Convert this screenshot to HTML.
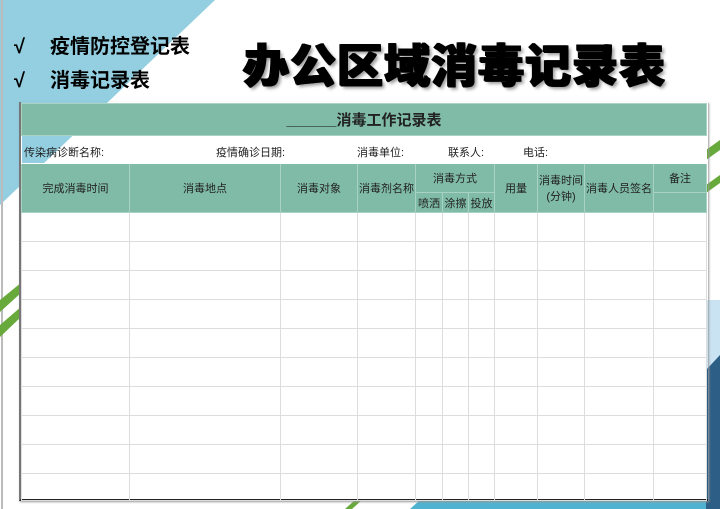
<!DOCTYPE html>
<html><head><meta charset="utf-8"><style>
body{margin:0;width:720px;height:509px;overflow:hidden;background:#fff;position:relative;font-family:"Liberation Sans","Noto Sans CJK SC",sans-serif}
.abs{position:absolute}
table{border-collapse:collapse;table-layout:fixed}
td{border:1px solid #ddd;padding:0;text-align:center;font-size:11px;color:#222}
.g td{background:#7fbba6;border-color:#a8d2c2}
</style></head><body>
<svg class="abs" style="left:0;top:0" width="720" height="509">
<polygon points="0,0 215,0 0,205" fill="#93cfe1"/>
<line x1="2" y1="0" x2="2" y2="509" stroke="#bbb" stroke-width="2"/>
<polygon points="0,300 22,282 22,292 0,312" fill="#67a93a"/>
<polygon points="0,325 22,306 22,316 0,337" fill="#67a93a"/>
<polygon points="706,150 720,140 720,150 706,160" fill="#67a93a"/>
<polygon points="706,185 720,175 720,183 706,193" fill="#67a93a"/>
<rect x="706" y="300" width="14" height="209" fill="#c9e3f3"/>
<polygon points="706,370 720,355 720,509 706,509" fill="#2d5f86"/>
<polygon points="410,509 420,500 706,500 706,509" fill="#4fb3d0"/>
<polygon points="345,509 355,500 362,500 352,509" fill="#67a93a"/>
</svg>
<div class="abs" style="left:14px;top:30px;font-size:20px;font-weight:bold;line-height:34px"><span style="display:inline-block;width:36px">√</span>疫情防控登记表<br><span style="display:inline-block;width:36px">√</span>消毒记录表</div>
<div class="abs" style="left:243px;top:30px;font-size:46px;font-weight:900;letter-spacing:1px;white-space:nowrap;text-shadow:1px 1px 0 #000,-1px 0 0 #000,1px 0 0 #000,0 1px 0 #000,3px 3px 3px #999">办公区域消毒记录表</div>
<div class="abs" style="left:19px;top:102px;width:687px;height:397px;border-left:2px solid #777;border-bottom:2px solid #222;box-shadow:1px 1px 2px #999"></div>
<table class="abs" style="left:21px;top:103px;width:685px">
<colgroup><col style="width:108px"><col style="width:151px"><col style="width:77px"><col style="width:58px"><col style="width:27px"><col style="width:26px"><col style="width:26px"><col style="width:43px"><col style="width:47px"><col style="width:69px"><col style="width:53px"></colgroup>
<tr class="g" style="height:32px"><td colspan="11" style="font-size:15px;font-weight:bold">______消毒工作记录表</td></tr>
<tr style="height:28px"><td colspan="11" style="border-color:#fff;text-align:left;position:relative"><span style="position:absolute;left:2px;top:8px">传染病诊断名称:</span><span style="position:absolute;left:194px;top:8px">疫情确诊日期:</span><span style="position:absolute;left:335px;top:8px">消毒单位:</span><span style="position:absolute;left:426px;top:8px">联系人:</span><span style="position:absolute;left:501px;top:8px">电话:</span></td></tr>
<tr class="g" style="height:29px"><td rowspan="2">完成消毒时间</td><td rowspan="2">消毒地点</td><td rowspan="2">消毒对象</td><td rowspan="2">消毒剂名称</td><td colspan="3">消毒方式</td><td rowspan="2">用量</td><td rowspan="2">消毒时间<br>(分钟)</td><td rowspan="2">消毒人员签名</td><td>备注</td></tr>
<tr class="g" style="height:20px"><td>喷洒</td><td>涂擦</td><td>投放</td><td></td></tr>
<tr style="height:29px"><td></td><td></td><td></td><td></td><td></td><td></td><td></td><td></td><td></td><td></td><td></td></tr>
<tr style="height:29px"><td></td><td></td><td></td><td></td><td></td><td></td><td></td><td></td><td></td><td></td><td></td></tr>
<tr style="height:29px"><td></td><td></td><td></td><td></td><td></td><td></td><td></td><td></td><td></td><td></td><td></td></tr>
<tr style="height:29px"><td></td><td></td><td></td><td></td><td></td><td></td><td></td><td></td><td></td><td></td><td></td></tr>
<tr style="height:29px"><td></td><td></td><td></td><td></td><td></td><td></td><td></td><td></td><td></td><td></td><td></td></tr>
<tr style="height:29px"><td></td><td></td><td></td><td></td><td></td><td></td><td></td><td></td><td></td><td></td><td></td></tr>
<tr style="height:29px"><td></td><td></td><td></td><td></td><td></td><td></td><td></td><td></td><td></td><td></td><td></td></tr>
<tr style="height:29px"><td></td><td></td><td></td><td></td><td></td><td></td><td></td><td></td><td></td><td></td><td></td></tr>
<tr style="height:29px"><td></td><td></td><td></td><td></td><td></td><td></td><td></td><td></td><td></td><td></td><td></td></tr>
<tr style="height:27px"><td></td><td></td><td></td><td></td><td></td><td></td><td></td><td></td><td></td><td></td><td></td></tr>
</table>
</body></html>
